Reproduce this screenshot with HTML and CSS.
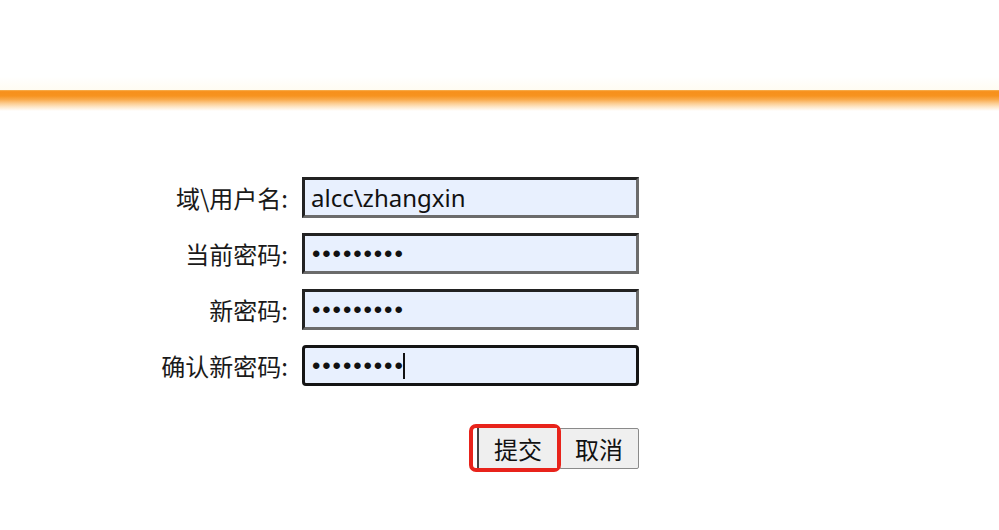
FILE: index.html
```html
<!DOCTYPE html>
<html lang="zh-CN">
<head>
<meta charset="utf-8">
<title>修改密码</title>
<link rel="stylesheet" href="styles.css">
</head>
<body>
<div class="header"></div>
<div class="band"></div>
<main class="page">
  <form class="form">
    <label class="label" for="u">域\用户名:</label>
    <input class="field" id="u" type="text" value="alcc\zhangxin">
    <label class="label" for="p1">当前密码:</label>
    <input class="field" id="p1" type="password" value="123456789">
    <label class="label" for="p2">新密码:</label>
    <input class="field" id="p2" type="password" value="123456789">
    <label class="label" for="p3">确认新密码:</label>
    <div class="wrap">
      <input class="field focused" id="p3" type="password" value="123456789">
      <span class="caret"></span>
    </div>
    <div class="actions">
      <span class="hl">
        <button type="button" class="btn submit">提交</button>
      </span>
      <button type="button" class="btn">取消</button>
    </div>
  </form>
</main>
</body>
</html>
```
FILE: styles.css
```css
html, body {
  margin: 0;
  padding: 0;
  background: #fff;
}
body {
  font-family: "Noto Sans CJK SC", "Noto Sans", sans-serif;
  color: #111;
}
.header {
  height: 90px;
  background: linear-gradient(#fff 0, #fff 85%, #fffcf2 100%);
}
.band {
  height: 21px;
  background: linear-gradient(#f6b255 0, #f7901c 8%, #f7931f 28%, #f9a94a 45%, #fcc98a 62%, #fee6c6 80%, #fff 100%);
}
.page {
  padding-top: 66px;
}
.form {
  display: grid;
  grid-template-columns: 288px 337px;
  column-gap: 14px;
  row-gap: 15px;
  align-items: center;
}
.label {
  text-align: right;
  font-size: 24px;
  line-height: 41px;
  color: #1a1a1a;
}
.field {
  box-sizing: border-box;
  width: 337px;
  height: 41px;
  margin: 0;
  padding: 0 0 0 6px;
  border: 3px solid;
  border-color: #222 #6b6b6b #6b6b6b #222;
  background: #e8f0fe;
  font-family: "Noto Sans", "Noto Sans CJK SC", sans-serif;
  font-size: 24px;
  color: #111;
  outline: none;
}
input[type="password"] {
  font-family: "Liberation Sans", sans-serif;
  font-size: 24px;
  letter-spacing: 1.9px;
  padding-left: 7px;
}
.wrap {
  position: relative;
  height: 41px;
}
.field.focused {
  border: 3px solid #141414;
  border-radius: 4px;
}
.caret {
  position: absolute;
  left: 101px;
  top: 8px;
  width: 2px;
  height: 26px;
  background: #111;
}
.actions {
  grid-column: 2;
  display: flex;
  justify-content: flex-end;
  align-items: center;
  margin-top: 23px;
}
.hl {
  display: flex;
  align-items: center;
  height: 40px;
  padding-left: 4px;
  border: 4px solid #e8231b;
  border-radius: 7px;
  margin-right: -2px;
  position: relative;
  z-index: 1;
}
.btn {
  box-sizing: border-box;
  width: 80px;
  height: 41px;
  margin: 0;
  padding: 0;
  background: #efefef;
  border: 1px solid #8a8a8a;
  border-radius: 2px;
  font-family: "Noto Sans CJK SC", sans-serif;
  font-size: 24px;
  color: #111;
}
.submit {
  height: 40px;
  border: none;
  border-left: 2px solid #444;
  border-radius: 0;
}
```
